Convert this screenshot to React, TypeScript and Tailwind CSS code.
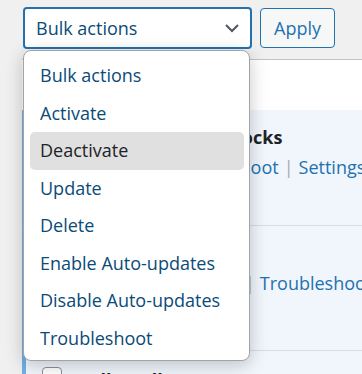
import React from 'react'

const actions = [
  'Bulk actions',
  'Activate',
  'Deactivate',
  'Update',
  'Delete',
  'Enable Auto-updates',
  'Disable Auto-updates',
  'Troubleshoot',
]

function Sep() {
  return <span className="mx-[5px] text-[#a7aaad]">|</span>
}

export default function App() {
  const active = 'Deactivate'

  return (
    <div className="relative h-[374px] w-[362px] overflow-hidden bg-[#f0f0f1] text-[18px] [font-family:'Open_Sans',sans-serif]">
      {/* Bulk actions bar */}
      <div className="flex items-start gap-2 pl-[23px] pt-[7px]">
        <div className="flex h-[42px] w-[229px] items-center justify-between rounded-[4px] border-2 border-[#2271b1] bg-white pl-[11px] pr-[10px] text-[#0a4b78]">
          <span>Bulk actions</span>
          <svg width="16" height="10" viewBox="0 0 16 10" className="text-[#50575e]">
            <polyline points="2,2 8,8 14,2" fill="none" stroke="currentColor" strokeWidth="2" />
          </svg>
        </div>
        <button className="mt-px flex h-[40px] w-[75px] items-center justify-center rounded-[4px] border border-[#2271b1] bg-[#f6f7f7] text-[#2271b1]">
          Apply
        </button>
      </div>

      {/* Plugins table behind */}
      <div className="ml-[22px] mt-[10px] border-t border-[#c3c4c7] bg-white">
        <div className="h-[50px]" />
        <div className="flex h-[116px] border-b border-l-4 border-b-[#dcdcde] border-l-[#72aee6] bg-[#f0f6fc]">
          <div className="pl-[32px] pt-[15px]">
            <div className="whitespace-nowrap font-bold leading-[24px] text-[#1d2327]">Advanced Custom Blocks</div>
            <div className="mt-[6px] whitespace-nowrap leading-[24px] text-[#2271b1]">
              Deactivate<Sep />Troubleshoot<Sep />Settings
            </div>
          </div>
        </div>
        <div className="flex h-[125px] border-b border-l-4 border-b-[#dcdcde] border-l-[#72aee6] bg-[#f0f6fc]">
          <div className="pl-[39px] pt-[15px]">
            <div className="whitespace-nowrap font-bold leading-[24px] text-[#1d2327]">Akismet</div>
            <div className="mt-[6px] whitespace-nowrap leading-[24px] text-[#2271b1]">
              Deactivate<Sep />Settings<Sep />Troubleshoot
            </div>
          </div>
        </div>
        <div className="flex h-[40px] border-l-4 border-l-[#72aee6] bg-[#f0f6fc]">
          <div className="ml-[16px] mt-[16px] h-[20px] w-[20px] rounded-[4px] border border-[#8c8f94] bg-white" />
          <div className="ml-[14px] mt-[16px] whitespace-nowrap font-bold text-[#1d2327]">Hello Dolly</div>
        </div>
      </div>

      {/* Open dropdown */}
      <div className="absolute left-[23px] top-[50px] h-[311px] w-[227px] rounded-[8px] border border-[#a3a3a3] bg-white py-[6px] shadow-[0_4px_18px_rgba(0,0,0,0.22)]">
        {actions.map((a) => (
          <div
            key={a}
            className={
              a === active
                ? 'ml-[6px] mr-[5px] flex h-[37.5px] items-center rounded-[5px] bg-[#e0e0e0] pl-[10px] text-[#1d2327]'
                : 'ml-[6px] mr-[5px] flex h-[37.5px] items-center pl-[10px] text-[#0a4b78]'
            }
          >
            {a}
          </div>
        ))}
      </div>
    </div>
  )
}
